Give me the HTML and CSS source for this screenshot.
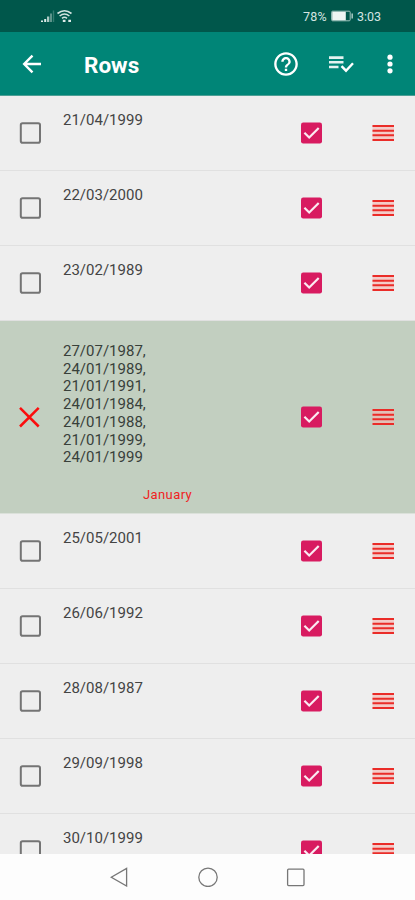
FILE: index.html
```
<!DOCTYPE html>
<html lang="en">
<head>
<meta charset="utf-8">
<title>Rows</title>
<link rel="stylesheet" href="styles.css">
</head>
<body>
<svg class="defs" width="0" height="0">
  <symbol id="empty" viewBox="0 0 22 22"><rect x="1.8" y="1.3" width="19.2" height="19.4" rx="1.8" fill="none" stroke="#747474" stroke-width="2"/></symbol>
  <symbol id="checked" viewBox="0 0 22 22"><rect x="1" y="0.5" width="21" height="21" rx="2.2" fill="#d81b60"/><path d="M4.400 10.800l4.800 4.700L18.700 6" fill="none" stroke="#fbeaf1" stroke-width="2.200"/></symbol>
  <symbol id="handle" viewBox="0 0 22 18"><rect x="0.500" y="1" width="21.500" height="16" fill="#f6b5b0" fill-opacity="0.600"/><path d="M0.500 2h21.500M0.500 6.700h21.500M0.500 11.300h21.500M0.500 16h21.500" stroke="#ea2c28" stroke-width="2"/></symbol>
  <symbol id="cross" viewBox="0 0 22 22"><path d="M1 1.800l18.700 18.700M19.700 1.800L1 20.500" stroke="#fb0d0d" stroke-width="2.500"/></symbol>
</svg>
<div class="screen">
  <div class="status">
    <svg class="signal" width="34" height="16" viewBox="0 0 34 16">
      <path d="M1 12.500h2v1.500H1zM4.200 11h2v3h-2z" fill="#dfece9"/>
      <path d="M7 8.500h2.300v5.500H7z" fill="#a9c8c2"/>
      <path d="M10 5.500h2v8.500h-2z" fill="#5d948b"/>
      <path d="M12.800 2.500h1.400V14h-1.400z" fill="#347c70"/>
      <g fill="none" stroke="#d3e4e1" stroke-width="1.600"><path d="M17.500 5.500q7-5.500 14 0M19.600 8q4.900-4 9.800 0M22 10.300q2.500-2 5 0"/></g>
      <path d="M22.800 11.800h2.700v2.200h-2.700zM28.300 11.800H31v2.200h-2.700z" fill="#dfece9"/>
    </svg>
    <div class="power">
      <span class="pct">78%</span>
      <svg width="23" height="12" viewBox="0 0 23 12"><rect x="0.600" y="1.200" width="18.600" height="9.600" rx="1" fill="none" stroke="#9fc3bd"/><rect x="1.200" y="1.700" width="13.600" height="8.600" fill="#eef5f3"/><path d="M21.200 3.500v5" stroke="#9fc3bd" stroke-width="1.600"/></svg>
      <span class="time">3:03</span>
    </div>
  </div>
  <header class="appbar">
    <svg class="back" width="20" height="20" viewBox="0 0 20 20"><path d="M19 10H2.500M10.500 1.700L2.200 10l8.300 8.300" fill="none" stroke="#fff" stroke-width="2.400"/></svg>
    <h1>Rows</h1>
    <svg class="help" width="26" height="26" viewBox="1 1 22 22"><path fill="#fff" d="M11 18h2v-2h-2v2zm1-16C6.480 2 2 6.480 2 12s4.480 10 10 10 10-4.480 10-10S17.520 2 12 2zm0 18c-4.410 0-8-3.590-8-8s3.590-8 8-8 8 3.590 8 8-3.590 8-8 8zm0-14c-2.210 0-4 1.790-4 4h2c0-1.100.900-2 2-2s2 .900 2 2c0 2-3 1.750-3 5h2c0-2.250 3-2.500 3-5 0-2.210-1.790-4-4-4z"/></svg>
    <svg class="tasks" width="26" height="18" viewBox="0 0 26 18"><path d="M1 2.600h14.500M1 7.300h14.500M1 12h9.500" stroke="#e4f2f0" stroke-width="2.600"/><path d="M13.500 11.200l4.500 4.500 7-7.500" fill="none" stroke="#fff" stroke-width="2.400"/></svg>
    <svg class="more" width="6" height="20" viewBox="0 0 6 20"><circle cx="3" cy="3.200" r="2.600" fill="#fff"/><circle cx="3" cy="10" r="2.600" fill="#fff"/><circle cx="3" cy="16.800" r="2.600" fill="#fff"/></svg>
  </header>
  <main class="list">
    <div class="row"><svg class="box"><use href="#empty"/></svg><div class="text">21/04/1999</div><svg class="box"><use href="#checked"/></svg><svg class="drag"><use href="#handle"/></svg></div>
    <div class="row"><svg class="box"><use href="#empty"/></svg><div class="text">22/03/2000</div><svg class="box"><use href="#checked"/></svg><svg class="drag"><use href="#handle"/></svg></div>
    <div class="row"><svg class="box"><use href="#empty"/></svg><div class="text">23/02/1989</div><svg class="box"><use href="#checked"/></svg><svg class="drag"><use href="#handle"/></svg></div>
    <div class="row group"><svg class="box"><use href="#cross"/></svg><div class="text">27/07/1987,<br>24/01/1989,<br>21/01/1991,<br>24/01/1984,<br>24/01/1988,<br>21/01/1999,<br>24/01/1999<div class="label">January</div></div><svg class="box"><use href="#checked"/></svg><svg class="drag"><use href="#handle"/></svg></div>
    <div class="row"><svg class="box"><use href="#empty"/></svg><div class="text">25/05/2001</div><svg class="box"><use href="#checked"/></svg><svg class="drag"><use href="#handle"/></svg></div>
    <div class="row"><svg class="box"><use href="#empty"/></svg><div class="text">26/06/1992</div><svg class="box"><use href="#checked"/></svg><svg class="drag"><use href="#handle"/></svg></div>
    <div class="row"><svg class="box"><use href="#empty"/></svg><div class="text">28/08/1987</div><svg class="box"><use href="#checked"/></svg><svg class="drag"><use href="#handle"/></svg></div>
    <div class="row"><svg class="box"><use href="#empty"/></svg><div class="text">29/09/1998</div><svg class="box"><use href="#checked"/></svg><svg class="drag"><use href="#handle"/></svg></div>
    <div class="row"><svg class="box"><use href="#empty"/></svg><div class="text">30/10/1999</div><svg class="box"><use href="#checked"/></svg><svg class="drag"><use href="#handle"/></svg></div>
  </main>
  <nav class="nav">
    <svg width="20" height="20" viewBox="0 0 20 20"><path d="M16.600 1.400v17.600L1.300 10.200z"/></svg>
    <svg width="20" height="20" viewBox="0 0 20 20"><circle cx="10" cy="10.300" r="9.200"/></svg>
    <svg width="20" height="20" viewBox="0 0 20 20"><rect x="1.600" y="2.200" width="16.400" height="16.400" rx="1"/></svg>
  </nav>
</div>
</body>
</html>
```
FILE: styles.css
```
* { box-sizing: border-box; }
body { margin: 0; font-family: Roboto, sans-serif; }
svg { display: block; flex: none; }
.defs { display: none; }
.screen { width: 415px; height: 900px; display: flex; flex-direction: column; overflow: hidden; background: #eee; }
.status { flex: none; height: 32px; background: #00574b; display: flex; justify-content: space-between; align-items: center; padding: 0 34px 0 40px; }
.power { display: flex; align-items: center; color: #d5e5e2; font-size: 12.5px; }
.power svg { margin: 0 3px 0 4px; }
.pct { letter-spacing: 0.2px; }
.appbar { flex: none; height: 64px; background: #008577; border-bottom: 1px solid #4c9f95; display: flex; align-items: center; padding: 0 22px; }
.appbar h1 { margin: 3px auto 0 42px; font-size: 22.5px; font-weight: 700; line-height: 27px; color: #fff; }
.help { margin-right: 29px; }
.tasks { margin-right: 33px; }
.list { flex: 1; min-height: 0; overflow: hidden; }
.row { height: 75px; border-bottom: 1px solid #e0e0e0; display: grid; grid-template-columns: 22px 259px 22px 72px; align-items: center; padding-left: 19px; }
.row .box { width: 22px; height: 22px; }
.row .drag { width: 22px; height: 18px; justify-self: end; }
.text { align-self: start; padding: 16px 0 0 22px; font-size: 15px; line-height: 17.7px; color: #444; }
.group { height: 193px; background: #c2cfc0; border-bottom-color: #dbe1da; }
.group .text { padding-top: 22px; color: #38403a; }
.label { margin: 20px 0 0 80px; font-size: 13px; line-height: 16px; letter-spacing: 0.4px; color: #f02222; }
.nav { flex: none; height: 46px; background: #fdfdfd; display: flex; justify-content: center; align-items: center; gap: 68px; }
.nav path, .nav circle, .nav rect { fill: none; stroke: #777; stroke-width: 1.3; }
```
